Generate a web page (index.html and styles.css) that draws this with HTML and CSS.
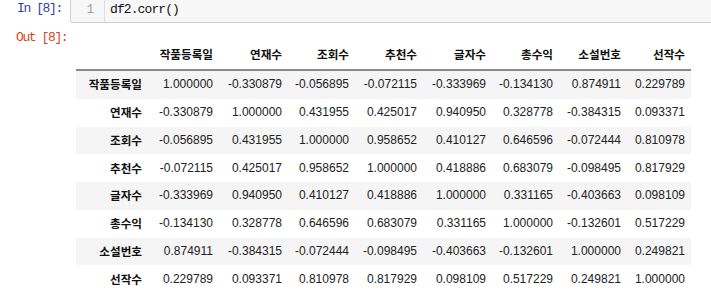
FILE: index.html
```html
<!DOCTYPE html>
<html lang="ko">
<head>
<meta charset="utf-8">
<title>df2.corr()</title>
<link rel="stylesheet" href="styles.css">
</head>
<body>
<div class="cell">
  <div class="in-row">
    <div class="prompt prompt-in">In&nbsp;[8]:</div>
    <div class="input-area">
      <div class="gutter">1</div>
      <div class="code">df2.corr()</div>
    </div>
  </div>
  <div class="out-row">
    <div class="prompt prompt-out">Out&nbsp;[8]:</div>
    <div class="output-area">
      <table class="df">
        <colgroup>
          <col class="c-idx"><col class="c1"><col class="c2"><col class="c3"><col class="c4"><col class="c5"><col class="c6"><col class="c7"><col class="c8">
        </colgroup>
        <thead>
          <tr><th></th><th>작품등록일</th><th>연재수</th><th>조회수</th><th>추천수</th><th>글자수</th><th>총수익</th><th>소설번호</th><th>선작수</th></tr>
        </thead>
        <tbody>
          <tr><th>작품등록일</th><td>1.000000</td><td>-0.330879</td><td>-0.056895</td><td>-0.072115</td><td>-0.333969</td><td>-0.134130</td><td>0.874911</td><td>0.229789</td></tr>
          <tr><th>연재수</th><td>-0.330879</td><td>1.000000</td><td>0.431955</td><td>0.425017</td><td>0.940950</td><td>0.328778</td><td>-0.384315</td><td>0.093371</td></tr>
          <tr><th>조회수</th><td>-0.056895</td><td>0.431955</td><td>1.000000</td><td>0.958652</td><td>0.410127</td><td>0.646596</td><td>-0.072444</td><td>0.810978</td></tr>
          <tr><th>추천수</th><td>-0.072115</td><td>0.425017</td><td>0.958652</td><td>1.000000</td><td>0.418886</td><td>0.683079</td><td>-0.098495</td><td>0.817929</td></tr>
          <tr><th>글자수</th><td>-0.333969</td><td>0.940950</td><td>0.410127</td><td>0.418886</td><td>1.000000</td><td>0.331165</td><td>-0.403663</td><td>0.098109</td></tr>
          <tr><th>총수익</th><td>-0.134130</td><td>0.328778</td><td>0.646596</td><td>0.683079</td><td>0.331165</td><td>1.000000</td><td>-0.132601</td><td>0.517229</td></tr>
          <tr><th>소설번호</th><td>0.874911</td><td>-0.384315</td><td>-0.072444</td><td>-0.098495</td><td>-0.403663</td><td>-0.132601</td><td>1.000000</td><td>0.249821</td></tr>
          <tr><th>선작수</th><td>0.229789</td><td>0.093371</td><td>0.810978</td><td>0.817929</td><td>0.098109</td><td>0.517229</td><td>0.249821</td><td>1.000000</td></tr>
        </tbody>
      </table>
    </div>
  </div>
</div>
</body>
</html>
```

FILE: styles.css
```css
html, body {
  margin: 0;
  padding: 0;
  background: #ffffff;
  overflow: hidden;
}

body {
  width: 711px;
  height: 308px;
  font-family: "Liberation Sans", "Noto Sans CJK KR", sans-serif;
  color: #000;
}

.cell {
  display: flex;
  flex-direction: column;
}

.in-row {
  display: flex;
  align-items: flex-start;
  margin-top: -7px;
}

.prompt {
  width: 70px;
  flex: 0 0 70px;
  box-sizing: border-box;
  font-family: "Liberation Mono", "DejaVu Sans Mono", monospace;
  font-size: 13px;
  letter-spacing: -1.4px;
  line-height: 16px;
}

.prompt-in {
  color: #303f9f;
  padding-left: 17px;
  padding-top: 8px;
}

.prompt-out {
  color: #d84315;
  padding-left: 16px;
  padding-top: 0;
}

.input-area {
  flex: 1;
  display: flex;
  background: #f7f7f7;
  border: 1px solid #cfcfcf;
  border-radius: 2px;
  margin-right: -3px;
  height: 28px;
}

.gutter {
  width: 34px;
  box-sizing: border-box;
  border-right: 1px solid #dddddd;
  text-align: right;
  padding-right: 10px;
  padding-top: 9px;
  font-family: "Liberation Mono", "DejaVu Sans Mono", monospace;
  font-size: 12px;
  line-height: 14px;
  color: #9a9a9a;
}

.code {
  padding-left: 5px;
  padding-top: 8px;
  font-family: "Liberation Mono", "DejaVu Sans Mono", monospace;
  font-size: 13px;
  letter-spacing: -0.9px;
  line-height: 16px;
  color: #111;
}

.out-row {
  display: flex;
  align-items: flex-start;
  margin-top: 7px;
}

.output-area {
  padding-left: 6px;
  padding-top: 11px;
}

.df {
  border-collapse: collapse;
  border-spacing: 0;
  table-layout: fixed;
  width: 615px;
  font-size: 12px;
}

.c-idx { width: 72px; }
.c1 { width: 71px; }
.c2 { width: 69px; }
.c3 { width: 67px; }
.c4 { width: 68px; }
.c5 { width: 69px; }
.c6 { width: 67px; }
.c7 { width: 68px; }
.c8 { width: 64px; }

.df th,
.df td {
  padding: 0 6px;
  text-align: right;
  white-space: nowrap;
  vertical-align: middle;
}

.df th {
  font-weight: bold;
  font-family: "Noto Sans CJK KR", "Liberation Sans", sans-serif;
  font-size: 11.6px;
  color: #111;
}

.df thead tr {
  border-bottom: 2px solid #8a8a8a;
}

.df thead th {
  height: 27px;
  line-height: 15px;
  padding-top: 0;
  padding-bottom: 1px;
}

.df tbody th,
.df tbody td {
  height: 27.75px;
  line-height: 15px;
}

.df td {
  color: #222;
}

.df tbody tr:nth-child(odd) {
  background: #f5f5f5;
}
```
